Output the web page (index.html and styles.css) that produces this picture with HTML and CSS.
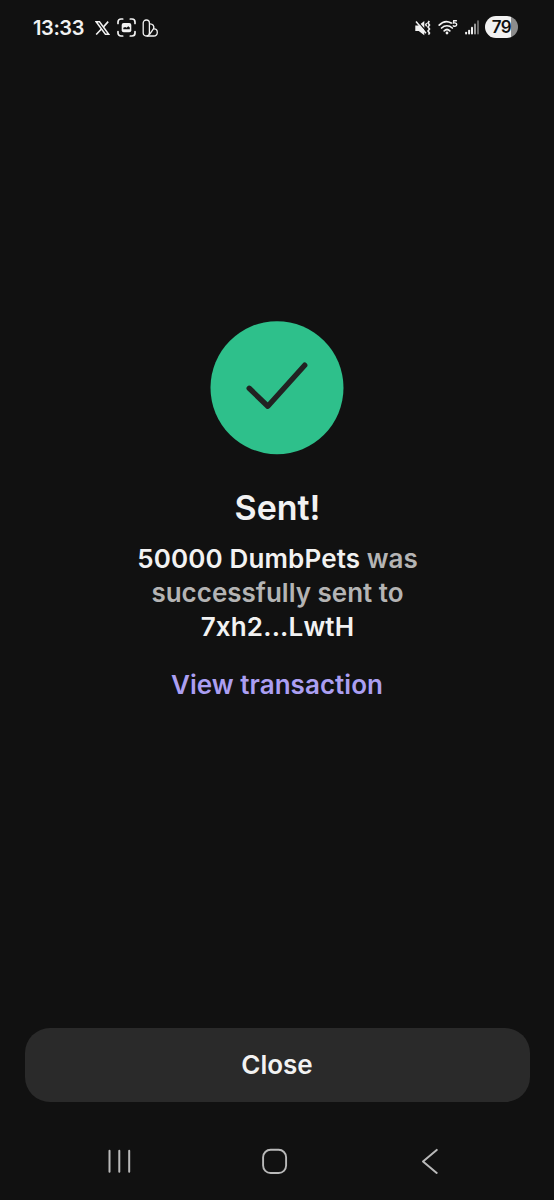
FILE: index.html
```html
<!DOCTYPE html>
<html lang="en">
<head>
<meta charset="utf-8">
<title>Sent</title>
<link rel="stylesheet" href="styles.css">
</head>
<body>
<div class="screen">
  <header class="status">
    <div class="status-left">
      <span class="time">13:33</span>
      <svg class="icon-x" width="15" height="14" viewBox="0 0 15 14" fill="none" stroke="#f2f2f2"><path d="M1.2.8h3.3l9.2 12.4h-3.3z" stroke-width="1.5"/><path d="M13.2.6 8.5 5.9M6.2 8.3 1.2 13.5" stroke-width="1.6"/></svg>
      <svg class="icon-capture" width="19" height="19" viewBox="0 0 19 19" fill="none"><path d="M1 5.5V4a3 3 0 0 1 3-3h1.7M13.3 1H15a3 3 0 0 1 3 3v1.5M18 13.5V15a3 3 0 0 1-3 3h-1.7M5.7 18H4a3 3 0 0 1-3-3v-1.5" stroke="#f2f2f2" stroke-width="1.7" stroke-linecap="round"/><rect x="4.7" y="5" width="9.6" height="9.2" rx="2" fill="#f2f2f2"/><path d="M6.3 11.3V9.8l1.9-.7 1.3.6 1.8-1.5 1.5 1.2v1.9z" fill="#111"/></svg>
      <svg class="icon-pages" width="17" height="18" viewBox="0 0 17 18" fill="none" stroke="#f2f2f2" stroke-width="1.3"><rect x="1.2" y="1" width="6.2" height="16" rx="3"/><path d="M7.4 4.9c3.4-.3 5.4 2.2 4 5L7.4 15.6"/><path d="M11.4 9.9c2.4-.5 3.9 1.1 3.9 3.3 0 2.4-1.6 3.8-3.7 3.8H5"/></svg>
    </div>
    <div class="status-right">
      <svg width="18" height="18" viewBox="0 0 18 18" fill="none" stroke="#f2f2f2"><path d="M1.3 6.4h3.4L10.3 2v14.2L4.7 12H1.3z" fill="#f2f2f2" stroke="none"/><path d="m3.5 2.4 8.3 9.2" stroke="#111" stroke-width="1.4"/><path d="m2 2.5 10 11.7" stroke-width="1.5"/><path d="M15.3 2l-1.3 2 1.5 2-1.5 2 1.5 2-1.5 2 1.5 2-1 1.6" stroke-width="1.6"/><path d="m12.7 4.2-1 1.5 1 1.6" stroke-width="1.4"/></svg>
      <svg class="icon-wifi" width="20" height="17" viewBox="0 0 20 17" fill="none" stroke="#f2f2f2" stroke-width="1.7" stroke-linecap="round"><path d="M1.2 6.1c3.5-3.6 8.1-4.4 12-2.1M3.6 9c3.1-3 7.6-3 10.7 0M6.2 11.8c1.6-1.5 4-1.5 5.6 0"/><circle cx="9" cy="14" r="1.4" fill="#f2f2f2" stroke="none"/><path d="M18.4 1.8h-2.7l-.3 2.3c1.7-.5 3.3 0 3.3 1.5 0 1.7-2 2.1-3.5 1.2" stroke-width="1.4"/></svg>
      <svg class="icon-signal" width="15" height="15" viewBox="0 0 15 15" fill="#f2f2f2"><rect x=".1" y="11.7" width="2" height="2.8" rx=".9"/><rect x="3.1" y="9.7" width="2" height="4.8" rx=".9"/><rect x="6" y="6.8" width="2" height="7.7" rx=".9"/><rect x="9" y="3.5" width="2" height="11" rx=".9" fill="#999"/><rect x="12" y=".3" width="2" height="14.2" rx=".9" fill="#666"/></svg>
      <span class="battery">79</span>
    </div>
  </header>

  <main class="result">
    <svg class="check" width="134" height="134" viewBox="0 0 134 134"><circle cx="67" cy="66.7" r="66.5" fill="#2ec08b"/><path d="M39.2 67.3 57.8 85.2 94.7 44.2" fill="none" stroke="#222" stroke-width="5.4" stroke-linecap="round" stroke-linejoin="round"/></svg>
    <h1 class="title">Sent!</h1>
    <p class="message"><strong class="strong">50000 DumbPets</strong> was<br>successfully sent to<br><strong class="strong">7xh2...LwtH</strong></p>
    <a class="link">View transaction</a>
  </main>

  <button class="close">Close</button>

  <nav class="nav">
    <svg width="24" height="26" viewBox="0 0 24 26" stroke="#b9b9b9" stroke-width="2" stroke-linecap="round"><path d="M2.5 2.8v21M12.3 2.8v21M22.2 2.8v21"/></svg>
    <svg class="nav-home" width="26" height="26" viewBox="0 0 26 26" fill="none" stroke="#b9b9b9" stroke-width="1.9"><rect x="1.1" y="1.8" width="23" height="23.2" rx="7.5"/></svg>
    <svg class="nav-back" width="18" height="26" viewBox="0 0 18 26" fill="none" stroke="#b9b9b9" stroke-width="2" stroke-linecap="round" stroke-linejoin="round"><path d="M15.7 1.9 2 13.4l13.7 11.5"/></svg>
  </nav>
</div>
</body>
</html>
```
FILE: styles.css
```css
* { box-sizing: border-box; }
body { margin: 0; background: #111; }
.screen {
  width: 554px;
  height: 1200px;
  display: flex;
  flex-direction: column;
  background: #111;
  color: #f2f2f2;
  font-family: Inter, "Liberation Sans", sans-serif;
  font-weight: 600;
}
.status {
  height: 54px;
  padding: 1px 36px 0 33px;
  display: flex;
  justify-content: space-between;
}
.status-left, .status-right { display: flex; align-items: center; }
.time { width: 62px; font-size: 20px; letter-spacing: -0.4px; line-height: 24px; }
.icon-capture { margin-left: 7px; }
.icon-pages { margin-left: 6px; }
.icon-wifi { margin-left: 6px; }
.icon-signal { margin-left: 7px; }
.battery {
  width: 33px;
  height: 22px;
  margin: 0 0 2px 5px;
  border-radius: 11px;
  background: linear-gradient(90deg, #f2f2f2 79%, #8c8c8c 79%);
  color: #111;
  font-size: 17px;
  letter-spacing: -0.5px;
  line-height: 23px;
  text-align: center;
}
.result {
  height: 973.5px;
  padding-top: 267px;
  display: flex;
  flex-direction: column;
  align-items: center;
}
.check { display: block; }
.title { margin: 32px 0 0; padding-left: 1px; font-size: 34px; font-weight: 600; line-height: 42px; }
.message {
  margin: 13px 0 0;
  padding-left: 1px;
  color: #b4b4b4;
  font-size: 26px;
  line-height: 34px;
  text-align: center;
}
.strong { color: #f2f2f2; font-weight: 600; letter-spacing: 0.15px; }
.link { margin-top: 24px; color: #ab9ff2; font-size: 26px; letter-spacing: 0.05px; line-height: 34px; }
.close {
  flex: none;
  width: 505px;
  height: 74px;
  margin-left: 24.5px;
  padding: 0;
  border: 0;
  border-radius: 25px;
  background: #2a2a2a;
  color: #f2f2f2;
  font: 600 26px/34px Inter, "Liberation Sans", sans-serif;
}
.nav {
  height: 96.5px;
  padding: 22px 115px 0 107px;
  display: flex;
  justify-content: space-between;
  align-items: center;
}
.nav-home { margin-right: 3px; }
```
